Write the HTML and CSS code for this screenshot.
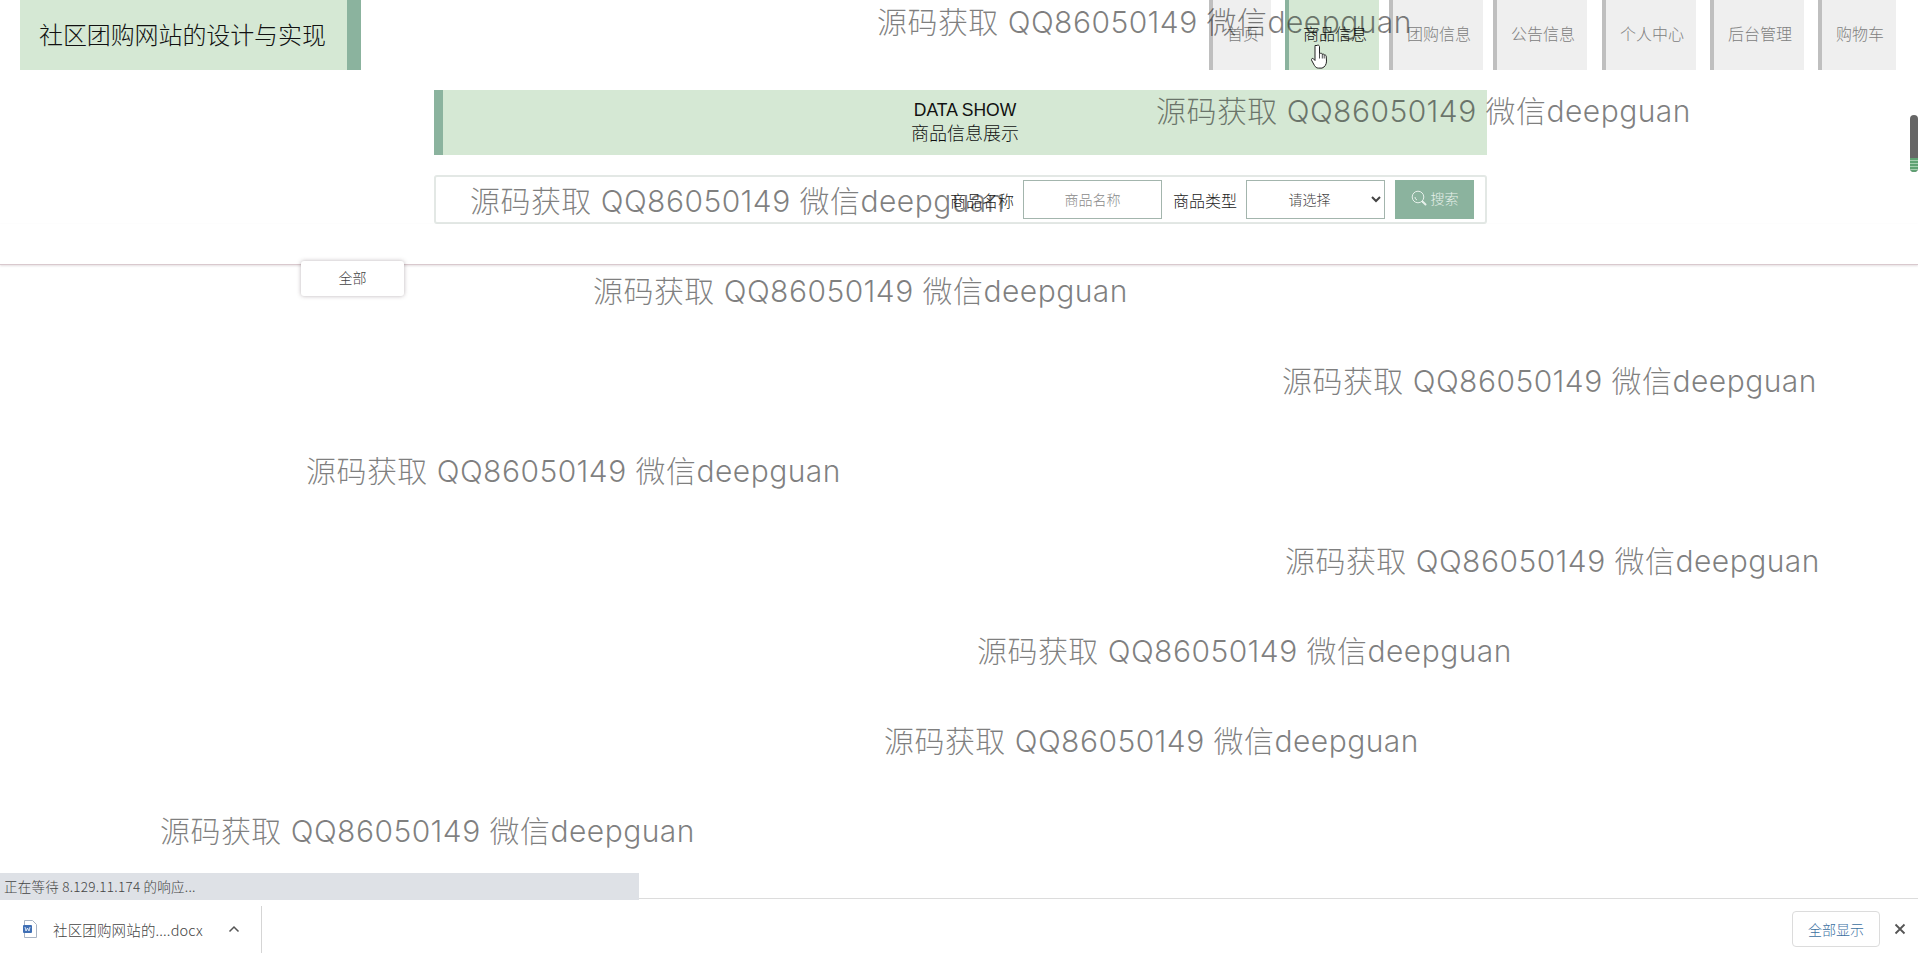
FILE: index.html
```html
<!DOCTYPE html>
<html lang="zh-CN">
<head>
<meta charset="utf-8">
<title>社区团购网站的设计与实现</title>
<link rel="stylesheet" href="styles.css">
</head>
<body>
<div class="page">
  <main class="content">
    <header class="top">
      <div class="logo">社区团购网站的设计与实现</div>
      <nav class="nav">
        <a class="nav-item">首页</a>
        <a class="nav-item active">商品信息</a>
        <a class="nav-item">团购信息</a>
        <a class="nav-item">公告信息</a>
        <a class="nav-item">个人中心</a>
        <a class="nav-item">后台管理</a>
        <a class="nav-item">购物车</a>
      </nav>
    </header>
    <section class="banner">
      <div>DATA SHOW</div>
      <div class="banner-cn">商品信息展示</div>
    </section>
    <form class="search">
      <label class="search-label">商品名称</label>
      <input class="field" type="text" placeholder="商品名称">
      <label class="search-label">商品类型</label>
      <select class="field select"><option>请选择</option></select>
      <button class="search-btn" type="button">
        <svg class="search-icon" viewBox="0 0 16 16" width="16" height="16" fill="none" stroke="currentColor">
          <circle cx="7" cy="7" r="5.8" stroke-width="1"/>
          <path d="M4 7a3 3 0 0 0 2 3" stroke-width="1"/>
          <path d="M11.5 11.5l3 3" stroke-width="2" stroke-linecap="round"/>
        </svg>
        搜索
      </button>
    </form>
    <div class="tabs">
      <div class="tab">全部</div>
    </div>
  </main>
  <footer class="downloads">
    <div class="dl-file">
      <svg class="dl-icon" viewBox="0 0 16 18" width="16" height="18">
        <path d="M2.5 .5h8l4 4v13h-12z" fill="#fff" stroke="#a9b4c4"/>
        <rect x="1" y="5" width="9" height="8" rx="1" fill="#3f6fb5"/>
        <path d="M3 7l1 4 1.5-3 1.5 3 1-4" fill="none" stroke="#fff" stroke-width=".8"/>
      </svg>
      <span class="dl-name">社区团购网站的....docx</span>
      <svg class="dl-chevron" viewBox="0 0 12 8" width="12" height="8" fill="none" stroke="#555" stroke-width="1.5"><path d="M1.5 6.5L6 2l4.500 4.500"/></svg>
    </div>
    <button class="dl-all" type="button">全部显示</button>
    <svg class="dl-close" viewBox="0 0 12 12" width="12" height="12" fill="none" stroke="#555" stroke-width="1.800"><path d="M1.500 1.500l9 9M10.500 1.500l-9 9"/></svg>
  </footer>
</div>

<div class="status">正在等待 8.129.11.174 的响应...</div>

<div class="wm wm1">源码获取 QQ86050149 微信deepguan</div>
<div class="wm wm2">源码获取 QQ86050149 微信deepguan</div>
<div class="wm wm3">源码获取 QQ86050149 微信deepguan</div>
<div class="wm wm4">源码获取 QQ86050149 微信deepguan</div>
<div class="wm wm5">源码获取 QQ86050149 微信deepguan</div>
<div class="wm wm6">源码获取 QQ86050149 微信deepguan</div>
<div class="wm wm7">源码获取 QQ86050149 微信deepguan</div>
<div class="wm wm8">源码获取 QQ86050149 微信deepguan</div>
<div class="wm wm9">源码获取 QQ86050149 微信deepguan</div>
<div class="wm wm10">源码获取 QQ86050149 微信deepguan</div>

<div class="thumb"><div class="thumb-stripes"></div></div>

<svg class="cursor" viewBox="0 0 18 25" width="18" height="25">
  <path d="M6 1.500c1-.800 2.300-.300 2.500 1v7l1-.2c.8-.2 1.500.2 1.800.8.800-.3 1.600 0 1.900.8.900-.2 1.800.3 2 1.200l.3 5c0 3-1.500 6-4.500 7h-3.500c-2 0-3-1-4-2.500l-3-5.500c-.5-1 .8-2.300 2-1.300l1.500 1.700V3c0-.7 0-1.100 0-1.500z" fill="#fff" stroke="#222" stroke-width="1"/>
  <path d="M8.500 9.500v5M11.300 10v4.500M13.200 11v3.500" fill="none" stroke="#222" stroke-width=".8"/>
</svg>
</body>
</html>
```

FILE: styles.css
```css
* { box-sizing: border-box; }

html, body {
  margin: 0;
  height: 958px;
  overflow: hidden;
  background: #fff;
  font-family: "Liberation Sans", "Noto Sans CJK SC", sans-serif;
}

.page {
  display: flex;
  flex-direction: column;
  height: 958px;
}

.content { flex: 1; }

/* header */
.top {
  display: flex;
  justify-content: space-between;
  height: 70px;
  padding: 0 22px 0 20px;
}

.logo {
  width: 341px;
  padding-left: 19px;
  background: #d5e8d4;
  border-right: 14px solid #8bb39e;
  color: #111;
  font: 300 24px/67px "Noto Sans CJK SC", sans-serif;
  letter-spacing: -.1px;
}

.nav { display: flex; }

.nav-item {
  display: block;
  padding: 0 12px 0 14px;
  background: #efefef;
  border-left: 4px solid #bfbfbf;
  color: #808080;
  font: 300 16px/67px "Noto Sans CJK SC", sans-serif;
  white-space: nowrap;
}

.nav-item:nth-child(2) { margin-left: 14px; }
.nav-item:nth-child(3) { margin-left: 10px; }
.nav-item:nth-child(4) { margin-left: 10px; }
.nav-item:nth-child(5) { margin-left: 15px; }
.nav-item:nth-child(6) { margin-left: 14px; }
.nav-item:nth-child(7) { margin-left: 14px; }

.nav-item.active {
  background: #d5e8d4;
  border-left-color: #8bb39e;
  color: #111;
}

/* banner */
.banner {
  width: 1053px;
  height: 65px;
  margin: 20px 0 0 434px;
  padding-top: 8px;
  background: #d5e8d4;
  border-left: 9px solid #8bb39e;
  color: #111;
  font-size: 17.500px;
  line-height: 25px;
  text-align: center;
}

.banner-cn {
  margin-top: -3px;
  font: 300 18px/25px "Noto Sans CJK SC", sans-serif;
}

/* search */
.search {
  display: flex;
  align-items: center;
  justify-content: flex-end;
  width: 1053px;
  height: 49px;
  margin: 20px 0 0 434px;
  padding-right: 11px;
  border: 2px solid #e3e8e5;
  border-radius: 3px;
}

.search-label {
  margin-right: 9px;
  color: #222;
  font: 300 16px/1 "Noto Sans CJK SC", sans-serif;
}

.field {
  width: 139px;
  height: 39px;
  margin-right: 11px;
  padding: 0 0 2px;
  background: #fff;
  border: 1px solid #a3b5ad;
  color: #444;
  font: 300 14px "Noto Sans CJK SC", sans-serif;
  text-align: center;
}

.field::placeholder { color: #8a8a8a; }

.select { margin-right: 10px; }

.search-btn {
  display: flex;
  align-items: center;
  justify-content: center;
  gap: 4px;
  width: 79px;
  height: 39px;
  padding: 0 0 3px;
  background: #8bb39e;
  border: 0;
  color: #e6f0ea;
  font: 300 14px "Noto Sans CJK SC", sans-serif;
}

/* tabs */
.tabs {
  height: 41px;
  padding: 37px 0 0 301px;
  border-bottom: 1px solid #d9c9ce;
  box-shadow: 0 1px 2px rgba(120, 90, 100, .2);
}

.tab {
  position: relative;
  width: 103px;
  height: 35px;
  background: #fff;
  border-radius: 3px;
  box-shadow: 0 0 4px rgba(60, 40, 50, .35);
  color: #444;
  font: 300 14px/33px "Noto Sans CJK SC", sans-serif;
  text-align: center;
}

/* download bar */
.downloads {
  display: flex;
  align-items: center;
  height: 60px;
  padding: 1px 0 0;
  background: #fff;
  border-top: 1px solid #dcdcdc;
}

.dl-file {
  display: flex;
  align-items: center;
  width: 262px;
  height: 47px;
  padding-left: 22px;
  border-right: 1px solid #d5d5d5;
}

.dl-name {
  margin-left: 15px;
  color: #444;
  font: 300 14.500px "Noto Sans CJK SC", sans-serif;
  letter-spacing: .15px;
  white-space: nowrap;
}

.dl-chevron { margin-left: 25px; }

.dl-all {
  width: 88px;
  height: 36px;
  margin: 0 14px 0 auto;
  background: #fff;
  border: 1px solid #dcdcdc;
  border-radius: 4px;
  color: #3c6f9f;
  font: 300 14px "Noto Sans CJK SC", sans-serif;
}

.dl-close { margin-right: 12px; }

/* overlays */
.status {
  position: absolute;
  left: 0;
  top: 873px;
  width: 639px;
  height: 27px;
  padding-left: 4px;
  background: #dee1e6;
  color: #444;
  font: 300 13.500px/27px "Noto Sans CJK SC", sans-serif;
  letter-spacing: .25px;
}

.wm {
  position: absolute;
  color: rgba(0, 0, 0, .5);
  font: 300 30px/40px Inter, "Noto Sans CJK SC", sans-serif;
  letter-spacing: .45px;
  white-space: nowrap;
  pointer-events: none;
}

.wm1 { left: 877px; top: 2px; }
.wm2 { left: 1156px; top: 91px; }
.wm3 { left: 470px; top: 181px; }
.wm4 { left: 593px; top: 271px; }
.wm5 { left: 1282px; top: 361px; }
.wm6 { left: 306px; top: 451px; }
.wm7 { left: 1285px; top: 541px; }
.wm8 { left: 977px; top: 631px; }
.wm9 { left: 884px; top: 721px; }
.wm10 { left: 160px; top: 811px; }

.thumb {
  position: absolute;
  left: 1910px;
  top: 115px;
  width: 8px;
  height: 57px;
  overflow: hidden;
  background: #666;
  border-radius: 4px;
}

.thumb-stripes {
  height: 14px;
  margin-top: 43px;
  background: repeating-linear-gradient(#5fa273 0 2px, #a6cfb0 2px 3px);
}

.cursor {
  position: absolute;
  left: 1311px;
  top: 44px;
}
```
